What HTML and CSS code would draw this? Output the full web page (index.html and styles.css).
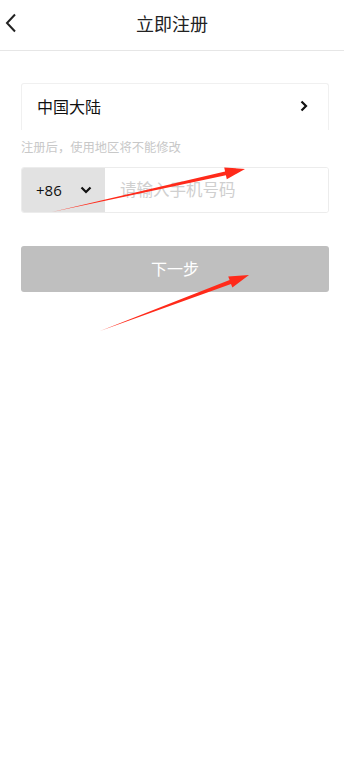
FILE: index.html
```html
<!DOCTYPE html>
<html lang="zh-CN">
<head>
    <meta charset="UTF-8">
    <meta name="viewport" content="width=device-width, initial-scale=1.0">
    <title>立即注册</title>
    <link rel="stylesheet" href="styles.css">
</head>
<body>
    <header class="topbar">
        <span class="back">
            <svg width="12" height="20" viewBox="0 0 12 20"><path d="M10 1.5 L2 10 L10 18.5" fill="none" stroke="#222" stroke-width="2"/></svg>
        </span>
        <h1>立即注册</h1>
    </header>
    <main class="form">
        <div class="region">
            <span>中国大陆</span>
            <svg width="8" height="12" viewBox="0 0 8 12"><path d="M1.5 1.5 L6 6 L1.5 10.5" fill="none" stroke="#111" stroke-width="2.2"/></svg>
        </div>
        <p class="hint">注册后，使用地区将不能修改</p>
        <div class="phone">
            <div class="code">
                <span>+86</span>
                <svg width="12" height="8" viewBox="0 0 12 8"><path d="M1.5 1.5 L6 6 L10.5 1.5" fill="none" stroke="#111" stroke-width="2.2"/></svg>
            </div>
            <input type="tel" placeholder="请输入手机号码">
        </div>
        <button class="next">下一步</button>
    </main>
    <!-- annotation arrows -->
    <svg class="marks" width="344" height="773" viewBox="0 0 344 773">
        <polygon points="52,212 225.1,171.4 224.2,167.5 245,169 226.8,179.2 225.9,175.3" fill="#ff2a1a"/>
        <polygon points="100,331 229.6,280.1 228.2,276.4 249,275 232.4,287.6 231,283.9" fill="#ff2a1a"/>
    </svg>
</body>
</html>
```

FILE: styles.css
```css
body {
    margin: 0;
    background: #fff;
    font-family: "Noto Sans CJK SC", "Noto Sans", sans-serif;
    color: #222;
    position: relative;
    min-height: 773px;
}
.topbar {
    height: 51px;
    border-bottom: 1px solid #e6e6e6;
    display: flex;
    align-items: center;
    justify-content: center;
    position: relative;
    box-sizing: border-box;
    padding-bottom: 5px;
}
.topbar h1 {
    margin: 0;
    font-size: 18px;
    font-weight: normal;
    color: #222;
    line-height: 24px;
}
.back {
    position: absolute;
    left: 5px;
    top: 13px;
}
.form {
    padding: 32px 15px 0 21px;
}
.region {
    height: 47px;
    border: 1px solid #f0f0f0;
    border-bottom: none;
    border-radius: 3px 3px 0 0;
    display: flex;
    align-items: center;
    justify-content: space-between;
    padding: 0 20px 3px 15px;
    box-sizing: border-box;
    font-size: 16px;
    color: #111;
}
.hint {
    margin: 9px 0 0;
    font-size: 12.3px;
    color: #c8c8c8;
    line-height: 16px;
}
.phone {
    margin-top: 12px;
    height: 46px;
    display: flex;
    border: 1px solid #ececec;
    border-radius: 3px;
    overflow: hidden;
    box-sizing: border-box;
}
.code {
    width: 83px;
    background: #e2e2e2;
    display: flex;
    align-items: center;
    justify-content: space-between;
    padding: 0 13px 0 14px;
    box-sizing: border-box;
    font-size: 15px;
    color: #111;
    font-family: "Open Sans", "Noto Sans CJK SC", sans-serif;
}
.phone input {
    flex: 1;
    border: none;
    outline: none;
    padding: 0 0 2px 15px;
    font-size: 16.5px;
    font-family: "Noto Sans CJK SC", sans-serif;
    background: #fff;
}
.phone input::placeholder {
    color: #cfcfcf;
}
.next {
    display: block;
    width: 100%;
    margin-top: 33px;
    height: 46px;
    border: none;
    border-radius: 3px;
    background: #bfbfbf;
    color: #fff;
    font-size: 16px;
    font-family: "Noto Sans CJK SC", sans-serif;
    padding-bottom: 3px;
}
.marks {
    position: absolute;
    left: 0;
    top: 0;
    pointer-events: none;
}
```
